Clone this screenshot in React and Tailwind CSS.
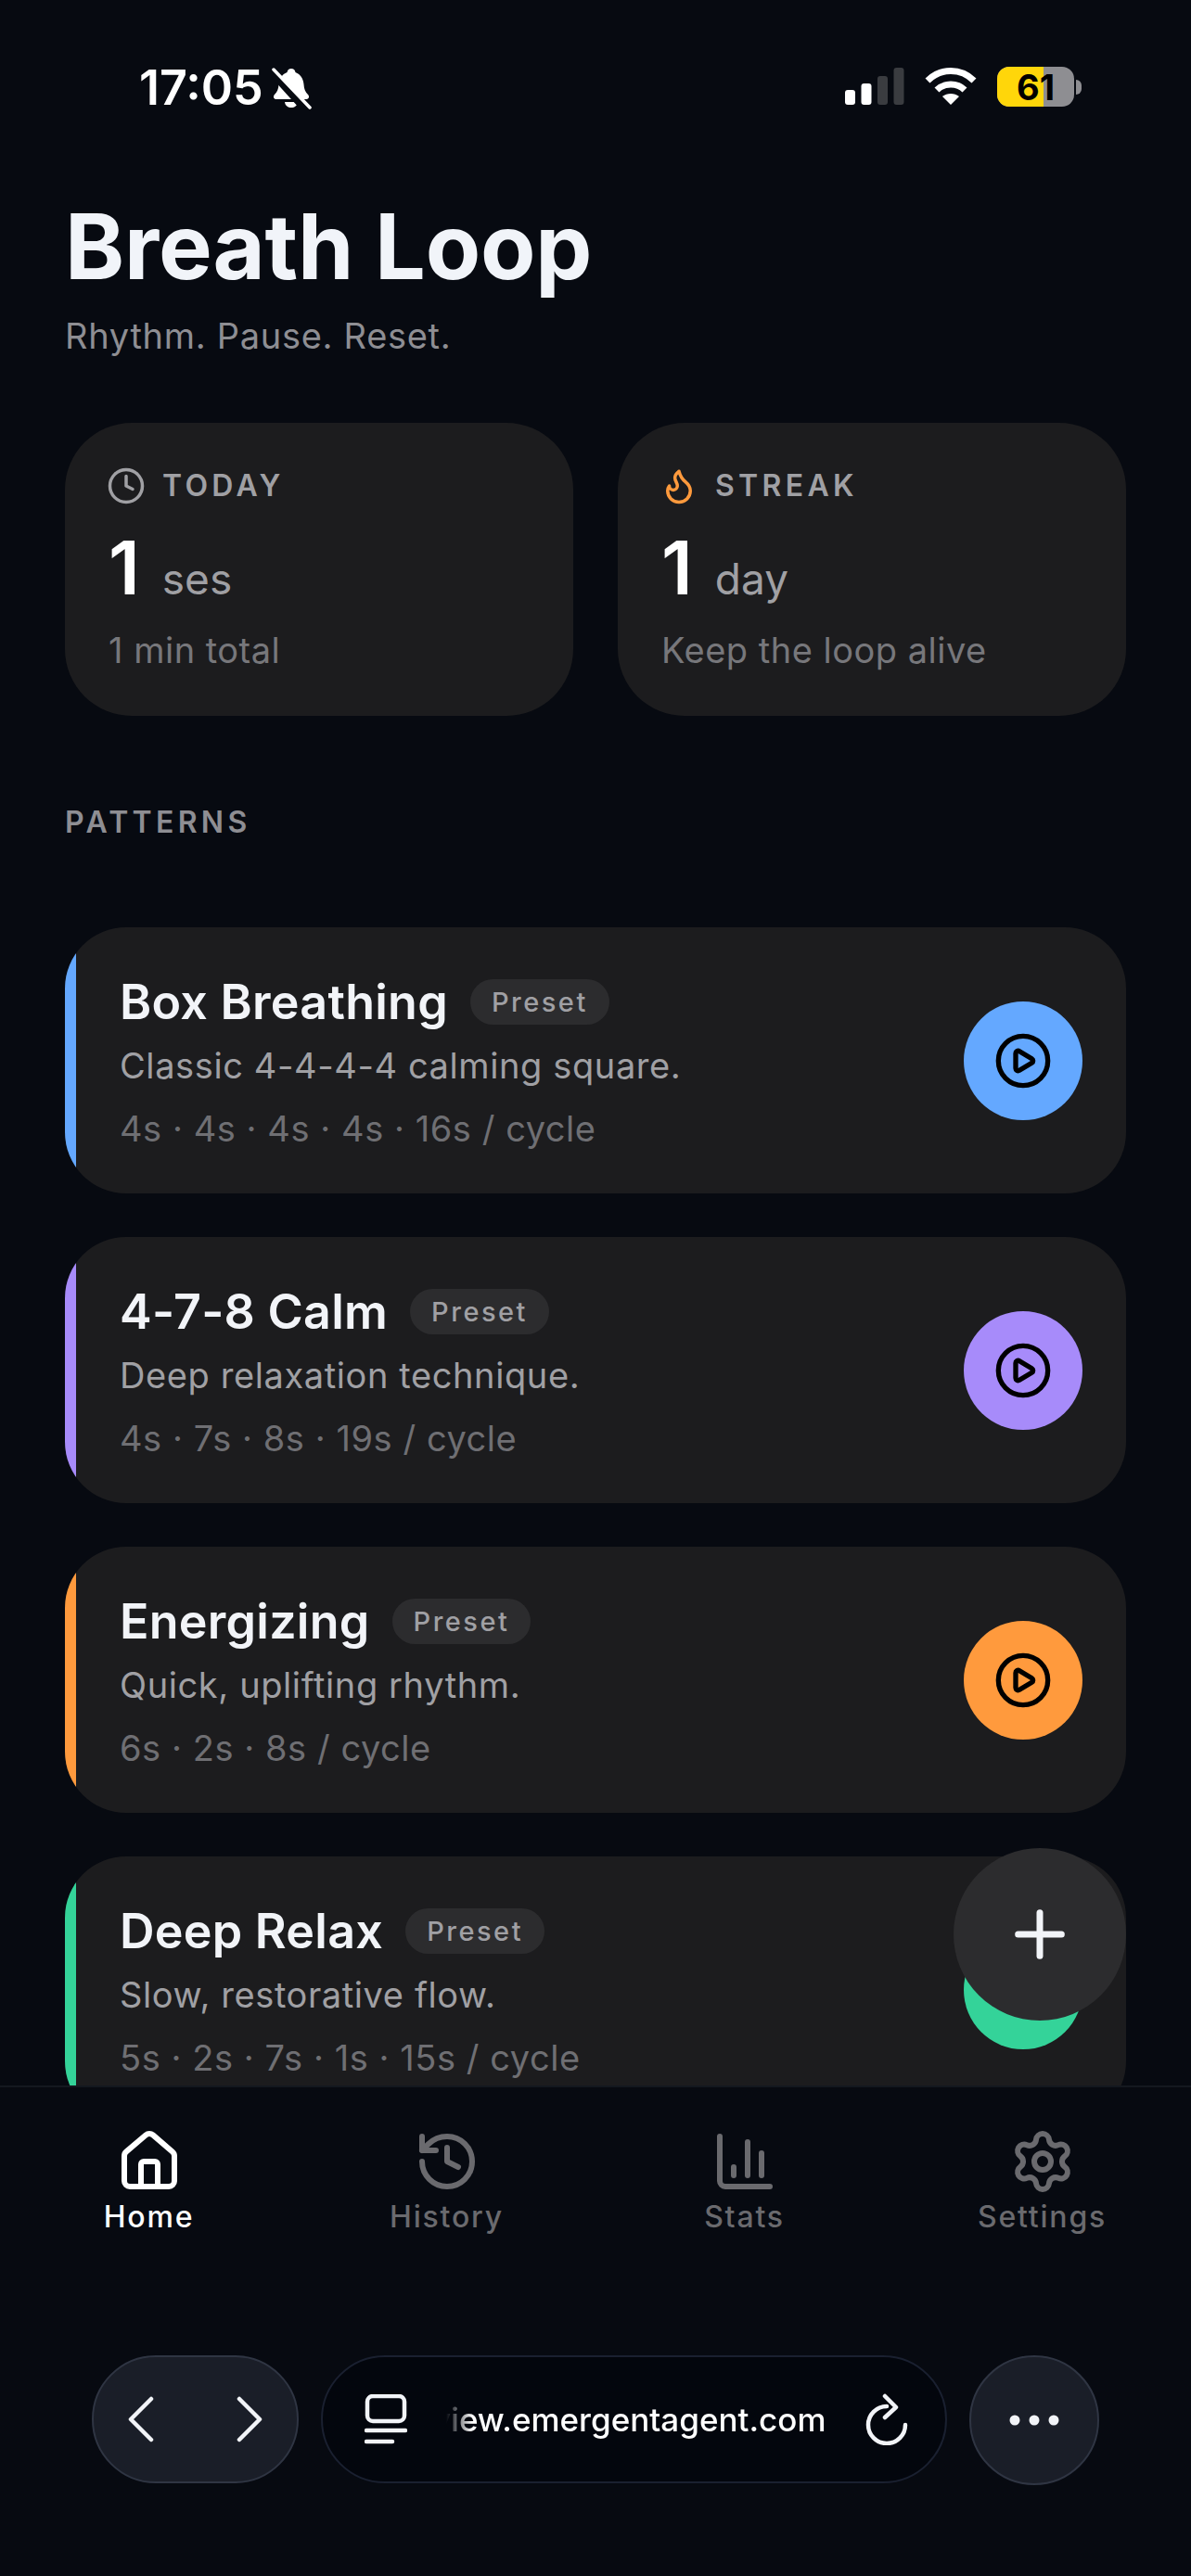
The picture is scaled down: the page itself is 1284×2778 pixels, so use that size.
import { Clock, Flame, CirclePlay, Plus, House, History, ChartColumn, Settings } from "lucide-react";

const PATTERNS = [
  { name: "Box Breathing", desc: "Classic 4-4-4-4 calming square.", meta: "4s · 4s · 4s · 4s · 16s / cycle", bar: "bg-[#64a8ff]" },
  { name: "4-7-8 Calm", desc: "Deep relaxation technique.", meta: "4s · 7s · 8s · 19s / cycle", bar: "bg-[#a78bfa]" },
  { name: "Energizing", desc: "Quick, uplifting rhythm.", meta: "6s · 2s · 8s / cycle", bar: "bg-[#ff9a3d]" },
  { name: "Deep Relax", desc: "Slow, restorative flow.", meta: "5s · 2s · 7s · 1s · 15s / cycle", bar: "bg-[#34d399]" },
];

const TABS = [
  { icon: House, label: "Home", active: true },
  { icon: History, label: "History" },
  { icon: ChartColumn, label: "Stats" },
  { icon: Settings, label: "Settings" },
];

function StatusBar() {
  return (
    <div className="flex h-[186px] shrink-0 items-start justify-between pl-[150px] pr-[118px] pt-[72px] text-white">
      <div className="flex items-center gap-[8px]">
        <span className="text-[52px] font-semibold leading-[44px]">17:05</span>
        <svg width="44" height="46" viewBox="0 0 44 46" fill="white">
          <path d="M22 2c2.500 0 4 1.500 4.500 4 5.500 2 8.500 7 9 13 .3 5 1.500 8 4.500 11 2 2.200 1 5-2 5H6c-3 0-4-2.800-2-5 3-3 4.200-6 4.500-11 .5-6 3.500-11 9-13C18 3.500 19.500 2 22 2z" />
          <path d="M15 38h14c-.5 4-3.500 6-7 6s-6.500-2-7-6z" />
          <path d="M0 4 38 46" stroke="#070a11" strokeWidth="9" />
          <path d="M3 3 42 44" stroke="white" strokeWidth="3.500" strokeLinecap="round" />
        </svg>
      </div>
      <div className="flex items-center gap-[22px]">
        <svg width="64" height="42" viewBox="0 0 64 42">
          <rect x="0" y="24" width="11" height="16" rx="3" fill="white" />
          <rect x="17.500" y="17" width="11" height="23" rx="3" fill="white" />
          <rect x="35" y="9" width="11" height="31" rx="3" fill="#3a3c40" />
          <rect x="52.500" y="0" width="11" height="40" rx="3" fill="#3a3c40" />
        </svg>
        <svg width="56" height="42" viewBox="0 0 56 42" fill="none" stroke="white">
          <path d="M3 14C17 0 39 0 53 14" strokeWidth="7" />
          <path d="M13 24C21 16 35 16 43 24" strokeWidth="7" />
          <path d="M28 40 19 31c5-4 13-4 18 0z" fill="white" stroke="none" />
        </svg>
        <div className="flex items-center gap-[2px]">
          <div className="relative flex h-[43px] w-[83px] items-center justify-center overflow-hidden rounded-[13px] bg-[#8e8e92]">
            <div className="absolute inset-y-0 left-0 w-[50px] bg-[#ffd60a]" />
            <span className="relative text-[38px] font-bold leading-none text-black">61</span>
          </div>
          <div className="h-[16px] w-[6px] rounded-r-[6px] bg-[#8e8e92]" />
        </div>
      </div>
    </div>
  );
}

function StatCard({ icon: Icon, iconClass, label, value, unit, sub }) {
  return (
    <div className="h-[316px] rounded-[72px] bg-[#1c1c1e] px-[47px] pt-[47px]">
      <div className="flex h-[42px] items-center gap-[18px]">
        <Icon size={42} strokeWidth={2} className={`-ml-[2px] ${iconClass}`} />
        <span className="text-[32px] font-semibold tracking-[4.300px] text-[#a0a0a4]">{label}</span>
      </div>
      <div className="mt-[27px] flex h-[80px] items-baseline gap-[24px]">
        <span className="text-[80px] font-semibold leading-[80px] text-white">{value}</span>
        <span className="text-[46px] text-[#a0a0a4]">{unit}</span>
      </div>
      <div className="mt-[26px] text-[38px] leading-[46px] tracking-[0.500px] text-[#77777b]">{sub}</div>
    </div>
  );
}

function PatternCard({ name, desc, meta, bar }) {
  return (
    <div className="flex h-[287px] shrink-0 overflow-hidden rounded-[66px] bg-[#1c1c1e]">
      <div className={`w-[12px] shrink-0 ${bar}`} />
      <div className="flex min-w-0 flex-1 items-center justify-between px-[47px]">
        <div className="pt-[4px]">
          <div className="flex items-center gap-[24px]">
            <span className="text-[52px] font-semibold leading-[62px] tracking-[0.250px] text-[#f2f4f8]">{name}</span>
            <span className="flex h-[49px] items-center rounded-full bg-[#2c2c2e] px-[23px] text-[29px] font-medium tracking-[2.500px] text-[#a0a0a4]">Preset</span>
          </div>
          <div className="mt-[12px] text-[38px] leading-[50px] tracking-[0.600px] text-[#a0a0a4]">{desc}</div>
          <div className="mt-[18px] text-[38px] leading-[50px] tracking-[0.550px] text-[#6f6f73]">{meta}</div>
        </div>
        <div className={`flex size-[128px] shrink-0 items-center justify-center rounded-full ${bar}`}>
          <CirclePlay size={64} strokeWidth={2} className="text-black" />
        </div>
      </div>
    </div>
  );
}

function BrowserBar() {
  return (
    <div className="flex flex-1 items-start gap-[24px] px-[99px] text-[#f2f4f8]">
      <div className="flex h-[138px] w-[223px] items-center justify-between rounded-[69px] border-2 border-[#2f3543] bg-[#1a1e28] px-[37px]">
        <svg width="28" height="50" viewBox="0 0 28 50" fill="none" stroke="currentColor" strokeWidth="4.500" strokeLinecap="round" strokeLinejoin="round">
          <path d="M25 3 3 25l22 22" />
        </svg>
        <svg width="28" height="50" viewBox="0 0 28 50" fill="none" stroke="currentColor" strokeWidth="4.500" strokeLinecap="round" strokeLinejoin="round">
          <path d="M3 3l22 22L3 47" />
        </svg>
      </div>
      <div className="flex h-[138px] flex-1 items-center justify-between rounded-[69px] border-2 border-[#1a2030] bg-[#03060d] pl-[45px] pr-[39px]">
        <svg width="46" height="54" viewBox="0 0 46 54" fill="none" stroke="currentColor" strokeWidth="4.500" strokeLinecap="round">
          <rect x="3" y="2" width="40" height="27" rx="6" />
          <path d="M2 39h42" />
          <path d="M2 51h28" />
        </svg>
        <div className="flex w-[410px] justify-end overflow-hidden whitespace-nowrap text-[35px] font-medium text-white [mask-image:linear-gradient(to_right,transparent,black_28px)]">
          <span>view.emergentagent.com</span>
        </div>
        <svg width="48" height="56" viewBox="0 0 48 56" fill="none" stroke="currentColor" strokeWidth="4.500" strokeLinecap="round" strokeLinejoin="round">
          <path d="M24 14A20 20 0 1 0 44 34" />
          <path d="M22 3l12 12-12 11" />
        </svg>
      </div>
      <div className="flex size-[140px] items-center justify-center rounded-full border-2 border-[#2f3543] bg-[#1a1e28]">
        <svg width="54" height="12" viewBox="0 0 54 12" fill="currentColor">
          <circle cx="6" cy="6" r="5.500" />
          <circle cx="27" cy="6" r="5.500" />
          <circle cx="48" cy="6" r="5.500" />
        </svg>
      </div>
    </div>
  );
}

export default function App() {
  return (
    <div className="relative flex h-[2778px] w-[1284px] flex-col overflow-hidden bg-[#070a11] font-['Inter',sans-serif]">
      <StatusBar />
      <div className="h-[2063px] shrink-0 overflow-hidden px-[70px]">
        <h1 className="mt-[26px] text-[97px] font-bold leading-[108px] tracking-[-0.200px] text-[#f1f4f9]">Breath Loop</h1>
        <p className="mt-[17px] text-[38px] leading-[50px] tracking-[0.700px] text-[#8e8e93]">Rhythm. Pause. Reset.</p>
        <div className="mt-[69px] grid grid-cols-2 gap-[48px]">
          <StatCard icon={Clock} iconClass="text-[#a0a0a4]" label="TODAY" value="1" unit="ses" sub="1 min total" />
          <StatCard icon={Flame} iconClass="text-[#ff9a3d]" label="STREAK" value="1" unit="day" sub="Keep the loop alive" />
        </div>
        <h2 className="mt-[95px] text-[32px] font-semibold leading-[40px] tracking-[4.300px] text-[#8e8e93]">PATTERNS</h2>
        <div className="mt-[93px] flex flex-col gap-[47px]">
          {PATTERNS.map((p) => (
            <PatternCard key={p.name} {...p} />
          ))}
        </div>
      </div>
      <nav className="grid h-[291px] shrink-0 grid-cols-4 content-start border-t-2 border-[#14181f] pt-[44px]">
        {TABS.map(({ icon: Icon, label, active }) => (
          <div key={label} className={`flex flex-col items-center gap-[4px] ${active ? "text-white" : "text-[#6a6a6e]"}`}>
            <Icon size={72} strokeWidth={2} />
            <span className="text-[32px] font-medium leading-[40px] tracking-[1.800px]">{label}</span>
          </div>
        ))}
      </nav>
      <BrowserBar />
      <button className="absolute left-[1028px] top-[1993px] flex size-[186px] items-center justify-center rounded-full bg-[#2c2c2e] text-[#f2f4f8]">
        <Plus size={80} strokeWidth={2.100} />
      </button>
    </div>
  );
}
